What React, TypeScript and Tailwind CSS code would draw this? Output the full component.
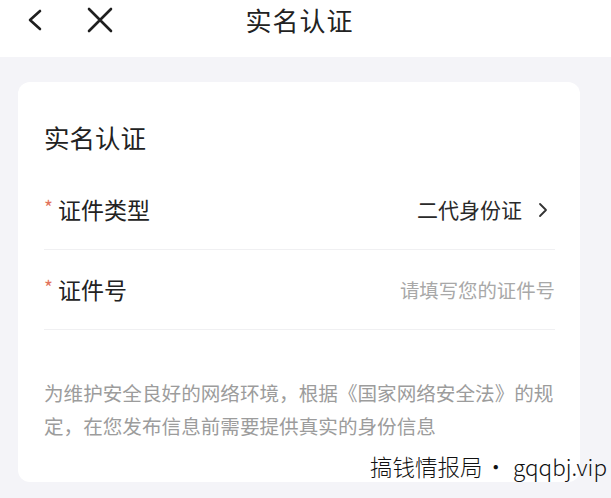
import React from "react";

const FONT = { fontFamily: '"Noto Sans CJK SC", "Noto Sans", sans-serif' };

function Star() {
  return <span className="text-[#e2745c] text-[19px] leading-none mr-[5px] relative top-[-3px]">*</span>;
}

export default function App() {
  return (
    <div className="relative w-[611px] h-[498px] bg-[#f4f4f8] overflow-hidden" style={FONT}>
      {/* header */}
      <div className="h-[57px] bg-white">
        <div className="h-[40px] grid grid-cols-[1fr_auto_1fr] items-center pr-[12px]">
          <div className="flex items-center pl-[27px] gap-[44px]">
            <svg width="16" height="22" viewBox="0 0 16 22" fill="none" stroke="#1f1f1f" strokeWidth="2.6" strokeLinecap="round" strokeLinejoin="round">
              <path d="M13 2 L3 11 L13 20" />
            </svg>
            <svg width="26" height="26" viewBox="0 0 26 26" fill="none" stroke="#1f1f1f" strokeWidth="2.6" strokeLinecap="round">
              <path d="M2 2 L24 24 M24 2 L2 24" />
            </svg>
          </div>
          <div className="text-[26px] leading-[40px] text-[#222] tracking-[1px]">实名认证</div>
          <div />
        </div>
      </div>

      {/* card */}
      <div className="mt-[25px] ml-[18px] w-[562px] bg-white rounded-[12px] pt-[37px] pb-[40px] pl-[26px] pr-[25px]">
        <div className="h-[36px] leading-[36px] text-[25.5px] text-[#222] mb-[15px]">实名认证</div>

        <div className="h-[80px] border-b border-[#f0f0f2] flex items-center justify-between">
          <div className="flex items-center text-[23px] text-[#222]">
            <Star />
            证件类型
          </div>
          <div className="flex items-center text-[21px] text-[#2a2a2a]">
            二代身份证
            <svg className="ml-[16px] mr-[7px]" width="10" height="16" viewBox="0 0 10 16" fill="none" stroke="#333" strokeWidth="1.8" strokeLinecap="round" strokeLinejoin="round">
              <path d="M2 2 L8 8 L2 14" />
            </svg>
          </div>
        </div>

        <div className="h-[80px] border-b border-[#f0f0f2] flex items-center justify-between">
          <div className="flex items-center text-[23px] text-[#222]">
            <Star />
            证件号
          </div>
          <div className="text-[19.4px] text-[#a8a8a8]">请填写您的证件号</div>
        </div>

        <div className="mt-[46px] text-[19.6px] leading-[33px] text-[#9c9c9c]">
          为维护安全良好的网络环境，根据《国家网络安全法》的规定，在您发布信息前需要提供真实的身份信息
        </div>
      </div>

      {/* watermark */}
      <div className="absolute left-[370px] top-[451px] flex items-center text-[22.5px] leading-[30px] text-[#111] font-light whitespace-nowrap">
        <span>搞钱情报局</span>
        <span className="ml-[2px] mr-[6px]">·</span>
        <span>gqqbj.vip</span>
      </div>
    </div>
  );
}
